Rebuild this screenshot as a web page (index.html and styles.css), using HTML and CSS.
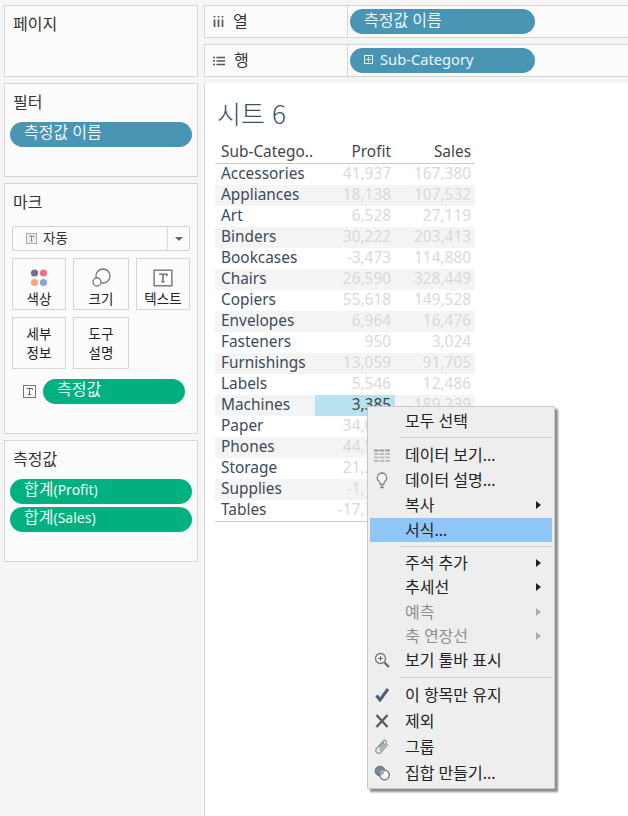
FILE: index.html
```html
<!DOCTYPE html>
<html lang="ko">
<head>
<meta charset="utf-8">
<title>시트 6</title>
<link rel="stylesheet" href="styles.css">
</head>
<body>
<div class="app">
  <aside class="side">
    <section class="card card-page"><h2 class="card-title">페이지</h2></section>
    <section class="card card-filter">
      <h2 class="card-title">필터</h2>
      <div class="pill pill-blue">측정값 이름</div>
    </section>
    <section class="card card-marks">
      <h2 class="card-title">마크</h2>
      <div class="select">
        <span class="select-label">
          <svg class="t-small" viewBox="0 0 11 11" width="11" height="11"><rect x=".5" y=".5" width="10" height="10" fill="#eee" stroke="#aaa"/><path d="M3 3h5v1.2M5.500 3v5M4.500 8h2" fill="none" stroke="#888"/></svg>
          자동
        </span>
        <span class="select-arrow"></span>
      </div>
      <div class="mark-grid">
        <div class="mark-btn">
          <svg width="20" height="20" viewBox="0 0 20 20"><circle cx="5.500" cy="5" r="3.600" fill="#7f6a95"/><circle cx="14.500" cy="5" r="3.600" fill="#ef6f80"/><circle cx="5.500" cy="14.500" r="3.600" fill="#f2a97e"/><circle cx="14.500" cy="14.500" r="3.600" fill="#83a7d3"/></svg>
          <span>색상</span>
        </div>
        <div class="mark-btn">
          <svg width="20" height="20" viewBox="0 0 20 20"><circle cx="12" cy="8" r="7" fill="#fff" stroke="#777" stroke-width="1.300"/><circle cx="6" cy="14" r="4" fill="#fff" stroke="#777" stroke-width="1.300"/></svg>
          <span>크기</span>
        </div>
        <div class="mark-btn">
          <svg width="20" height="20" viewBox="0 0 18 18"><rect x="1" y="2" width="16" height="14" fill="#fff" stroke="#777" stroke-width="1.300"/><path d="M5.500 5.500h7v2M9 5.500v7M7.500 12.500h3" fill="none" stroke="#666" stroke-width="1.300"/></svg>
          <span>텍스트</span>
        </div>
        <div class="mark-btn mark-btn-two"><span>세부<br>정보</span></div>
        <div class="mark-btn mark-btn-two"><span>도구<br>설명</span></div>
      </div>
      <div class="mark-field">
        <svg width="13" height="13" viewBox="0 0 13 13"><rect x=".5" y=".5" width="12" height="12" fill="#fff" stroke="#777"/><path d="M3.500 3.500h6v1.500M6.500 3.500v6M5 9.500h3" fill="none" stroke="#666"/></svg>
        <div class="pill pill-green pill-short">측정값</div>
      </div>
    </section>
    <section class="card card-values">
      <h2 class="card-title">측정값</h2>
      <div class="pill-stack">
        <div class="pill pill-green">합계<span class="latin-small">(Profit)</span></div>
        <div class="pill pill-green">합계<span class="latin-small">(Sales)</span></div>
      </div>
    </section>
  </aside>

  <main class="main">
    <div class="shelf">
      <div class="shelf-label">
        <svg width="11" height="11" viewBox="0 0 11 11"><path d="M1.500 0v1.500M5.500 0v1.500M9.500 0v1.500M1.500 3.500v7.500M5.500 3.500v7.500M9.500 3.500v7.500" stroke="#555" stroke-width="1.700"/></svg>
        <span>열</span>
      </div>
      <div class="shelf-body"><div class="pill pill-blue pill-shelf">측정값 이름</div></div>
    </div>
    <div class="shelf">
      <div class="shelf-label">
        <svg width="12" height="10" viewBox="0 0 12 10"><path d="M0 1.500h2M3.500 1.500H12M0 5h2M3.500 5H12M0 8.500h2M3.500 8.500H12" stroke="#555" stroke-width="1.700"/></svg>
        <span>행</span>
      </div>
      <div class="shelf-body">
        <div class="pill pill-blue pill-shelf">
          <svg class="plus-box" width="9" height="9" viewBox="0 0 9 9"><rect x=".5" y=".5" width="8" height="8" fill="none" stroke="#e8f3f7"/><path d="M2 4.500h5M4.500 2v5" stroke="#e8f3f7"/></svg>
          <span class="latin">Sub-Category</span>
        </div>
      </div>
    </div>
    <section class="sheet">
      <h1 class="sheet-title">시트 6</h1>
      <table class="crosstab">
        <thead><tr><th class="c-name">Sub-Catego..</th><th>Profit</th><th>Sales</th></tr></thead>
        <tbody>
          <tr><td class="c-name">Accessories</td><td>41,937</td><td>167,380</td></tr>
          <tr><td class="c-name">Appliances</td><td>18,138</td><td>107,532</td></tr>
          <tr><td class="c-name">Art</td><td>6,528</td><td>27,119</td></tr>
          <tr><td class="c-name">Binders</td><td>30,222</td><td>203,413</td></tr>
          <tr><td class="c-name">Bookcases</td><td>-3,473</td><td>114,880</td></tr>
          <tr><td class="c-name">Chairs</td><td>26,590</td><td>328,449</td></tr>
          <tr><td class="c-name">Copiers</td><td>55,618</td><td>149,528</td></tr>
          <tr><td class="c-name">Envelopes</td><td>6,964</td><td>16,476</td></tr>
          <tr><td class="c-name">Fasteners</td><td>950</td><td>3,024</td></tr>
          <tr><td class="c-name">Furnishings</td><td>13,059</td><td>91,705</td></tr>
          <tr><td class="c-name">Labels</td><td>5,546</td><td>12,486</td></tr>
          <tr><td class="c-name">Machines</td><td class="selected">3,385</td><td>189,239</td></tr>
          <tr><td class="c-name">Paper</td><td>34,054</td><td>78,479</td></tr>
          <tr><td class="c-name">Phones</td><td>44,516</td><td>330,007</td></tr>
          <tr><td class="c-name">Storage</td><td>21,279</td><td>223,844</td></tr>
          <tr><td class="c-name">Supplies</td><td>-1,189</td><td>46,674</td></tr>
          <tr><td class="c-name">Tables</td><td>-17,725</td><td>206,966</td></tr>
        </tbody>
      </table>
    </section>
  </main>
</div>

<nav class="menu">
  <div class="mi mi-a">모두 선택</div>
  <hr class="sep sep-a">
  <div class="mi mi-b"><svg class="mi-icon" width="16" height="14" viewBox="0 0 16 14"><path d="M0 1.500h16" stroke="#8a99a8" stroke-width="2.200" stroke-dasharray="4.600 1"/><path d="M0 5h16M0 8.500h16M0 12h16" stroke="#bdbdbd" stroke-width="2.200" stroke-dasharray="4.600 1"/></svg>데이터 보기...</div>
  <div class="mi mi-b"><svg class="mi-icon" width="16" height="18" viewBox="0 0 16 18"><path d="M8 1a4.700 4.700 0 0 0-2.600 8.600c.5.4.6 1.400.6 2.400h4c0-1 .1-2 .6-2.400A4.700 4.700 0 0 0 8 1z" fill="#f8f8f8" stroke="#8a8a8a" stroke-width="1.300"/><path d="M6 13.500h4" stroke="#aaa" stroke-width="1.300"/><path d="M6.500 15.500h3" stroke="#666" stroke-width="1.500"/></svg>데이터 설명...</div>
  <div class="mi mi-b mi-sub">복사</div>
  <div class="mi mi-b mi-active">서식...</div>
  <hr class="sep sep-b">
  <div class="mi mi-c mi-sub">주석 추가</div>
  <div class="mi mi-c mi-sub">추세선</div>
  <div class="mi mi-c mi-sub mi-off">예측</div>
  <div class="mi mi-c mi-sub mi-off">축 연장선</div>
  <div class="mi mi-c"><svg class="mi-icon" width="16" height="16" viewBox="0 0 16 16"><circle cx="6.500" cy="6.500" r="5" fill="#f6f6f6" stroke="#777" stroke-width="1.300"/><path d="M10.500 10.500L15 15" stroke="#666" stroke-width="2.200"/><path d="M4 6.500h5M6.500 4v5" stroke="#666"/></svg>보기 툴바 표시</div>
  <hr class="sep sep-c">
  <div class="mi mi-d"><svg class="mi-icon" width="16" height="14" viewBox="0 0 16 14"><path d="M2.500 7.500l3.500 4.500 8-11" fill="none" stroke="#4d5f70" stroke-width="3"/></svg>이 항목만 유지</div>
  <div class="mi mi-d"><svg class="mi-icon" width="16" height="14" viewBox="0 0 16 14"><path d="M2.500 1l11 12M13.500 1l-11 12" stroke="#4d5f70" stroke-width="2.400"/></svg>제외</div>
  <div class="mi mi-d"><svg class="mi-icon" width="16" height="16" viewBox="0 0 16 16"><path d="M5.500 11.500l6.500-7.300a1.700 1.700 0 0 0-2.600-2.200L2.600 9.500a2.800 2.800 0 0 0 4.200 3.800l7-8M5.500 8.500l4.500-5" fill="none" stroke="#8e98a0" stroke-width="1.300"/></svg>그룹</div>
  <div class="mi mi-d"><svg class="mi-icon" width="16" height="16" viewBox="0 0 16 16"><circle cx="6" cy="6" r="4.800" fill="#7d8790" stroke="#5f6a74"/><circle cx="10.500" cy="10" r="4.800" fill="#fff" stroke="#5f6a74" stroke-width="1.200"/><path d="M6 6.500a4.800 4.800 0 0 1 4.500-1.300 4.800 4.800 0 0 1-4.500 5.600z" fill="#a5adb4"/></svg>집합 만들기...</div>
</nav>
</body>
</html>
```

FILE: styles.css
```css
* { box-sizing: border-box; }
html, body { margin: 0; height: 100%; }
body {
  position: relative;
  width: 628px;
  height: 816px;
  overflow: hidden;
  background: #f5f5f5;
  color: #333;
  font: 15px/21px "Noto Sans", "Noto Sans CJK KR", sans-serif;
}
.app {
  display: flex;
  gap: 6px;
  padding: 5px 0 0 4px;
  height: 816px;
}
.side {
  width: 194px;
  flex: none;
  display: flex;
  flex-direction: column;
  gap: 6px;
}
.card {
  background: #fbfbfb;
  border: 1px solid #d4d4d4;
  padding: 8px 7px 0 7px;
}
.card-title {
  margin: 0 0 0 1px;
  font-size: 16px;
  font-weight: 400;
  line-height: 20px;
  color: #333;
}
.card-page { height: 72px; }
.card-filter { height: 94px; }
.card-marks { height: 251px; }
.card-values { height: 122px; }

.pill {
  height: 25px;
  border-radius: 13px;
  color: #eef7f6;
  font-size: 16px;
  line-height: 21px;
  padding-left: 14px;
  white-space: nowrap;
}
.latin { font-size: 14.700px; }
.latin-small { font-size: 14px; }
.pill-blue { background: #4a95b4; }
.pill-green { background: #00b180; }
.card-filter .pill { margin: 10px 0 0 -2px; width: 182px; }
.pill-stack {
  display: flex;
  flex-direction: column;
  gap: 3px;
  margin: 10px 0 0 -2px;
  width: 182px;
}
.pill-short { width: 142px; }

.select {
  display: flex;
  height: 25px;
  margin: 14px 0 0 0;
  width: 178px;
  border: 1px solid #cfcfcf;
  border-radius: 2px;
  background: #fbfbfb;
}
.select-label {
  flex: 1;
  display: flex;
  align-items: center;
  gap: 6px;
  padding-left: 13px;
  font-size: 13.500px;
  line-height: 21px;
  border-right: 1px solid #d8d8d8;
}
.select-arrow {
  width: 21px;
  position: relative;
}
.select-arrow::after {
  content: "";
  position: absolute;
  left: 7px;
  top: 10px;
  border: 4px solid transparent;
  border-top: 4px solid #666;
  border-bottom: 0;
}
.mark-grid {
  display: grid;
  grid-template-columns: 54px 56px 54px;
  grid-auto-rows: 52px;
  gap: 7px 7px;
  margin-top: 7px;
}
.mark-btn {
  border: 1px solid #d4d4d4;
  background: #fbfbfb;
  display: flex;
  flex-direction: column;
  align-items: center;
  justify-content: flex-end;
  gap: 2px;
  font-size: 13.500px;
  line-height: 19px;
  padding: 0;
  text-align: center;
  color: #222;
}
.mark-btn-two { justify-content: center; padding: 1px 0 0; }
.mark-field {
  display: flex;
  align-items: center;
  gap: 7px;
  margin: 10px 0 0 11px;
}

.main {
  flex: 1;
  display: flex;
  flex-direction: column;
  gap: 6px;
  min-width: 0;
}
.shelf {
  display: flex;
  height: 33px;
  background: #fbfbfb;
  border: 1px solid #d4d4d4;
  border-right: 0;
}
.shelf-label {
  width: 143px;
  flex: none;
  display: flex;
  align-items: center;
  gap: 9px;
  padding-left: 8px;
  border-right: 1px solid #d4d4d4;
  font-size: 16px;
  color: #333;
}
.shelf-body { padding: 3px 0 0 2px; }
.pill-shelf {
  width: 185px;
  display: flex;
  align-items: center;
  gap: 7px;
  line-height: 20px;
  padding-bottom: 3px;
}
.plus-box { margin-top: 1px; }
.sheet {
  flex: 1;
  background: #fff;
  border-left: 1px solid #d4d4d4;
  padding: 12px 0 0 10px;
}
.sheet-title {
  margin: 0 0 0 2px;
  font-size: 26px;
  font-weight: 200;
  line-height: 36px;
  color: #3d4f5f;
  font-family: "Noto Sans CJK KR", "Noto Sans", sans-serif;
}
.crosstab {
  margin-top: 11px;
  width: 260px;
  border-collapse: collapse;
  table-layout: fixed;
  font-size: 15.400px;
  color: #d9d9d9;
  border-bottom: 1px solid #c9c9c9;
}
.crosstab th {
  height: 21px;
  padding: 0 4px 1px 0;
  font-weight: 400;
  color: #444;
  text-align: right;
  line-height: 20px;
  border-bottom: 1px solid #c9c9c9;
  white-space: nowrap;
}
.crosstab th:nth-child(1) { width: 100px; }
.crosstab th:nth-child(2), .crosstab th:nth-child(3) { width: 80px; }
.crosstab td {
  height: 21px;
  padding: 0 4px 1px 0;
  text-align: right;
  line-height: 20px;
}
.crosstab tbody tr:nth-child(even) { background: #f4f4f4; }
.crosstab .c-name {
  text-align: left;
  padding-left: 6px;
  color: #3d4a58;
  white-space: nowrap;
}
.crosstab th.c-name { color: #444; }
.crosstab .selected { background: #b9e2f1; color: #444; }

.menu {
  position: absolute;
  left: 367px;
  top: 406px;
  width: 188px;
  height: 383px;
  background: #eee;
  border: 1px solid #c8c8c8;
  box-shadow: 3px 3px 2px #8c8c8c;
  padding: 2px;
  color: #222;
}
.mi {
  position: relative;
  height: 25px;
  line-height: 25px;
  padding-left: 35px;
  white-space: nowrap;
  font-size: 16px;
  color: #222;
}
.mi-c { height: 24.250px; line-height: 24px; }
.mi-d { height: 26px; line-height: 26px; }
.mi-icon {
  position: absolute;
  left: 4px;
  top: 50%;
  transform: translateY(-50%);
}
.mi-active { background: #90c6f6; height: 24px; line-height: 24px; }
.mi-off { color: #8f8f8f; }
.mi-sub::after {
  content: "";
  position: absolute;
  right: 11px;
  top: 8px;
  border: 4px solid transparent;
  border-left: 5px solid #222;
  border-right: 0;
}
.mi-off::after { border-left-color: #aaa; }
.sep {
  margin: 0 0 0 30px;
  width: 152px;
  border: 0;
  border-top: 1px solid #d2d2d2;
  height: 1px;
}
.sep-a { margin-top: 3px; margin-bottom: 5px; }
.sep-b { margin-top: 4px; margin-bottom: 4px; }
.sep-c { margin-top: 4.750px; margin-bottom: 4px; }
```
